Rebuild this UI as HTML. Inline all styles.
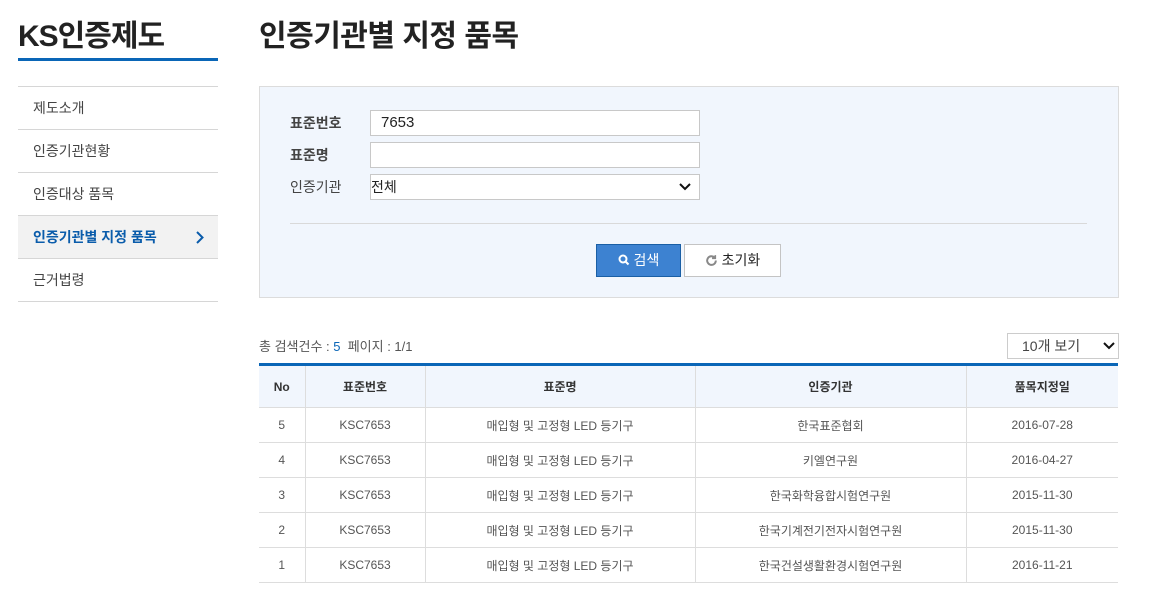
<!DOCTYPE html>
<html><head><meta charset="utf-8"><style>
*{margin:0;padding:0;box-sizing:border-box}
body{width:1168px;height:605px;background:#fff;font-family:"Liberation Sans","Noto Sans CJK KR",sans-serif;color:#333;position:relative;overflow:hidden}
.a{position:absolute}
.nav div{position:absolute;left:18px;width:200px;height:43px;border-bottom:1px solid #d6d6d6;font-size:14px;line-height:42px;padding-left:15px;color:#444}
.lbl{position:absolute;left:290px;font-size:14px;font-weight:bold;color:#444}
.inp{position:absolute;left:370px;width:330px;height:26px;border:1px solid #c8c8c8;background:#fff;font-size:15px;line-height:24px;color:#222}
table{position:absolute;left:259px;top:363px;width:859px;border-collapse:collapse;border-top:3px solid #0a66b7;font-size:12px;color:#555}
th{background:#f1f6fd;height:43px;font-weight:bold;color:#333;border-bottom:1px solid #ddd;border-left:1px solid #ddd}
td{height:35px;text-align:center;border-bottom:1px solid #ddd;border-left:1px solid #ddd}
th:first-child,td:first-child{border-left:none}
</style></head><body>
<div class="a" style="left:18px;top:11px;font-size:30px;font-weight:bold;color:#222;letter-spacing:-1px">KS인증제도</div>
<div class="a" style="left:18px;top:58px;width:200px;height:3px;background:#0a66b7"></div>
<div class="a" style="left:18px;top:86px;width:200px;height:1px;background:#d6d6d6"></div>
<div class="nav">
<div style="top:87px">제도소개</div>
<div style="top:130px">인증기관현황</div>
<div style="top:173px">인증대상 품목</div>
<div style="top:216px;background:#f2f2f2;color:#0a5cab;font-weight:bold">인증기관별 지정 품목<svg style="position:absolute;right:14px;top:15px" width="8" height="13" viewBox="0 0 8 13"><path d="M1 1l5.5 5.5L1 12" stroke="#0a5cab" stroke-width="2" fill="none"/></svg></div>
<div style="top:259px">근거법령</div>
</div>
<div class="a" style="left:259px;top:11px;font-size:30px;font-weight:bold;color:#222;letter-spacing:-0.5px">인증기관별 지정 품목</div>
<div class="a" style="left:259px;top:86px;width:860px;height:212px;background:#f1f6fd;border:1px solid #dcdcdc"></div>
<div class="lbl" style="top:113px">표준번호</div>
<div class="lbl" style="top:145px">표준명</div>
<div class="lbl" style="top:177px;font-weight:normal">인증기관</div>
<div class="inp" style="top:110px;padding-left:10px">7653</div>
<div class="inp" style="top:142px"></div>
<div class="inp" style="top:174px;font-size:14px">전체<svg style="position:absolute;right:8px;top:8px" width="12" height="8" viewBox="0 0 12 8"><path d="M1 1l5 5 5-5" stroke="#111" stroke-width="2" fill="none"/></svg></div>
<div class="a" style="left:290px;top:223px;width:797px;height:1px;background:#d9d9d9"></div>
<div class="a" style="left:596px;top:244px;width:85px;height:33px;background:#3d82d1;border:1px solid #1a5fa5;color:#fff;font-size:14px;line-height:31px;text-align:center"><svg width="12" height="12" viewBox="0 0 12 12" style="vertical-align:-1px"><circle cx="5" cy="5" r="3.5" stroke="#fff" stroke-width="2" fill="none"/><path d="M7.5 7.5l3 3" stroke="#fff" stroke-width="2"/></svg> 검색</div>
<div class="a" style="left:684px;top:244px;width:97px;height:33px;background:#fff;border:1px solid #c4c4c4;color:#222;font-size:14px;line-height:31px;text-align:center"><svg width="13" height="13" viewBox="0 0 12 12" style="vertical-align:-2px"><path d="M10 6a4 4 0 1 1-1.2-2.8" stroke="#888" stroke-width="1.8" fill="none"/><path d="M9.5 1v3h-3" stroke="#888" stroke-width="1.5" fill="none"/></svg> 초기화</div>
<div class="a" style="left:259px;top:336px;font-size:13px;color:#555">총 검색건수 : <span style="color:#0a66b7">5</span> &nbsp;페이지 : 1/1</div>
<div class="a" style="left:1007px;top:333px;width:112px;height:26px;border:1px solid #ccc;background:#fff;font-size:14px;line-height:24px;padding-left:14px;color:#444">10개 보기<svg style="position:absolute;right:3px;top:8px" width="12" height="8" viewBox="0 0 12 8"><path d="M1 1l5 5 5-5" stroke="#111" stroke-width="2" fill="none"/></svg></div>
<table>
<tr><th style="width:46px">No</th><th style="width:120px">표준번호</th><th style="width:270px">표준명</th><th style="width:271px">인증기관</th><th>품목지정일</th></tr>
<tr><td>5</td><td>KSC7653</td><td>매입형 및 고정형 LED 등기구</td><td>한국표준협회</td><td>2016-07-28</td></tr>
<tr><td>4</td><td>KSC7653</td><td>매입형 및 고정형 LED 등기구</td><td>키엘연구원</td><td>2016-04-27</td></tr>
<tr><td>3</td><td>KSC7653</td><td>매입형 및 고정형 LED 등기구</td><td>한국화학융합시험연구원</td><td>2015-11-30</td></tr>
<tr><td>2</td><td>KSC7653</td><td>매입형 및 고정형 LED 등기구</td><td>한국기계전기전자시험연구원</td><td>2015-11-30</td></tr>
<tr><td>1</td><td>KSC7653</td><td>매입형 및 고정형 LED 등기구</td><td>한국건설생활환경시험연구원</td><td>2016-11-21</td></tr>
</table>
</body></html>
